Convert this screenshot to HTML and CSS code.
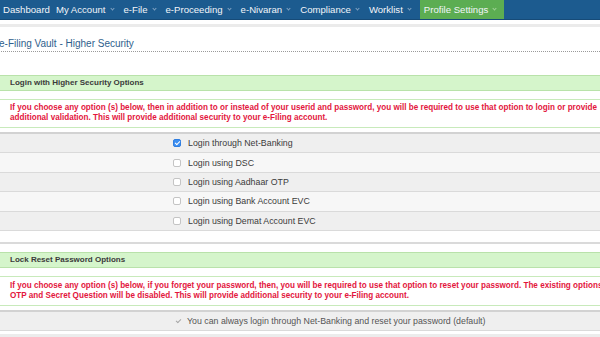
FILE: index.html
```html
<!DOCTYPE html>
<html>
<head>
<meta charset="utf-8">
<title>e-Filing Vault - Higher Security</title>
<link rel="stylesheet" href="styles.css">
</head>
<body>

<nav class="topnav">
    <ul>
        <li><a>Dashboard</a></li>
        <li class="drop"><a>My Account<i class="caret"></i></a></li>
        <li class="drop"><a>e-File<i class="caret"></i></a></li>
        <li class="drop"><a>e-Proceeding<i class="caret"></i></a></li>
        <li class="drop"><a>e-Nivaran<i class="caret"></i></a></li>
        <li class="drop"><a>Compliance<i class="caret"></i></a></li>
        <li class="drop"><a>Worklist<i class="caret"></i></a></li>
        <li class="drop active"><a>Profile Settings<i class="caret"></i></a></li>
    </ul>
</nav>
<div class="navrule"></div>

<div class="page">
    <h2 class="page-title">e-Filing Vault - Higher Security</h2>

    <div class="panel">
        <div class="panel-head">Login with Higher Security Options</div>
        <p class="note">If you choose any option (s) below, then in addition to or instead of your userid and password, you will be required to use that option to login or provide additional validation. This will provide additional security to your e-Filing account.</p>
        <table class="options">
            <tr><td class="spacer"></td><td><span class="cb checked"></span>Login through Net-Banking</td></tr>
            <tr><td class="spacer"></td><td><span class="cb"></span>Login using DSC</td></tr>
            <tr><td class="spacer"></td><td><span class="cb"></span>Login using Aadhaar OTP</td></tr>
            <tr><td class="spacer"></td><td><span class="cb"></span>Login using Bank Account EVC</td></tr>
            <tr><td class="spacer"></td><td><span class="cb"></span>Login using Demat Account EVC</td></tr>
        </table>
    </div>

    <div class="panel">
        <div class="panel-head">Lock Reset Password Options</div>
        <p class="note">If you choose any option (s) below, if you forget your password, then, you will be required to use that option to reset your password. The existing options OTP and Secret Question will be disabled. This will provide additional security to your e-Filing account.</p>
        <table class="options">
            <tr><td class="spacer"></td><td class="muted"><span class="cb locked"></span>You can always login through Net-Banking and reset your password (default)</td></tr>
        </table>
        <div class="tail"></div>
    </div>
</div>

</body>
</html>
```

FILE: styles.css
```css
html, body { margin: 0; padding: 0; overflow: hidden; background: #fff; }
body { font-family: "Liberation Sans", Arial, Helvetica, sans-serif; color: #333; width: 612px; }

.topnav { background-color: #1c5b8f; border-bottom: 1px solid #164b78; height: 19px; }
.topnav ul { list-style: none; margin: 0; padding: 0; display: flex; height: 19px; }
.topnav li a { display: flex; align-items: center; height: 19px; padding: 0 3px; font-size: 9.6px; color: #f2f5f9; white-space: nowrap; }
.topnav li.drop a { padding: 0 7px 0 3px; }
.topnav li.active a { background-color: #5cad52; padding: 0 8px 0 4px; margin-left: 2px; }
.topnav .caret { display: inline-block; width: 2px; height: 2px; margin: 0 0 2px 5px; border-right: 1px solid #7fa1c2; border-bottom: 1px solid #7fa1c2; transform: rotate(45deg); }
.topnav li.active .caret { border-color: #9fd195; }

.navrule { margin-top: 4px; height: 3px; background-color: #ebebeb; }

.page { padding: 0; }
.page-title { margin: 11px 0 0 -1px; font-size: 10px; font-weight: normal; line-height: 12px; color: #2f5f8d; border-bottom: 1px dotted #9a9a9a; padding-bottom: 1px; }

.panel { margin-top: 23px; }
.panel + .panel { margin-top: 11px; border-top: 2px solid #dadada; padding-top: 8px; }
.panel-head { background-color: #d5f5cb; border-top: 1px solid #b9e2aa; border-bottom: 1px solid #b9e2aa; height: 14px; line-height: 14px; padding-left: 10px; font-size: 8px; font-weight: bold; color: #3a3a3a; }
.note { margin: 8px 0 0; padding: 3px 4px 4px 10px; border-top: 1px solid #c8eabb; border-bottom: 1px solid #c8eabb; font-size: 8.15px; line-height: 10px; font-weight: bold; color: #e3163d; }
.panel + .panel .note { padding: 4px 4px 4px 10px; }

.options { width: 100%; border-collapse: collapse; margin-top: 4px; border-top: 2px solid #d2d2d2; }
.options td { height: 18.4px; padding: 0; border-bottom: 1px solid #dadada; font-size: 8.8px; color: #3b3b3b; white-space: nowrap; }
.options tr:nth-child(odd) td { background-color: #efefef; }
.options tr:nth-child(even) td { background-color: #f7f7f7; }
.options td.spacer { width: 173px; }
.options td.muted { color: #555; }

.cb { display: inline-block; vertical-align: -1px; box-sizing: border-box; width: 8px; height: 8px; margin-right: 7px; border: 1px solid #c4c4c4; border-radius: 2px; background-color: #fff; position: relative; }
.cb.checked { background-color: #3c8ff2; border-color: #2f7ee0; }
.cb.checked:after, .cb.locked:after { content: ""; position: absolute; left: 2px; top: 0; width: 2px; height: 4px; border-right: 1px solid #fff; border-bottom: 1px solid #fff; transform: rotate(45deg); }
.cb.locked { border-color: transparent; background: transparent; margin-left: 1px; margin-right: 5px; }
.cb.locked:after { border-color: #a8a8a8; }

.tail { margin-top: 3px; height: 10px; background-color: #ececec; }
```
